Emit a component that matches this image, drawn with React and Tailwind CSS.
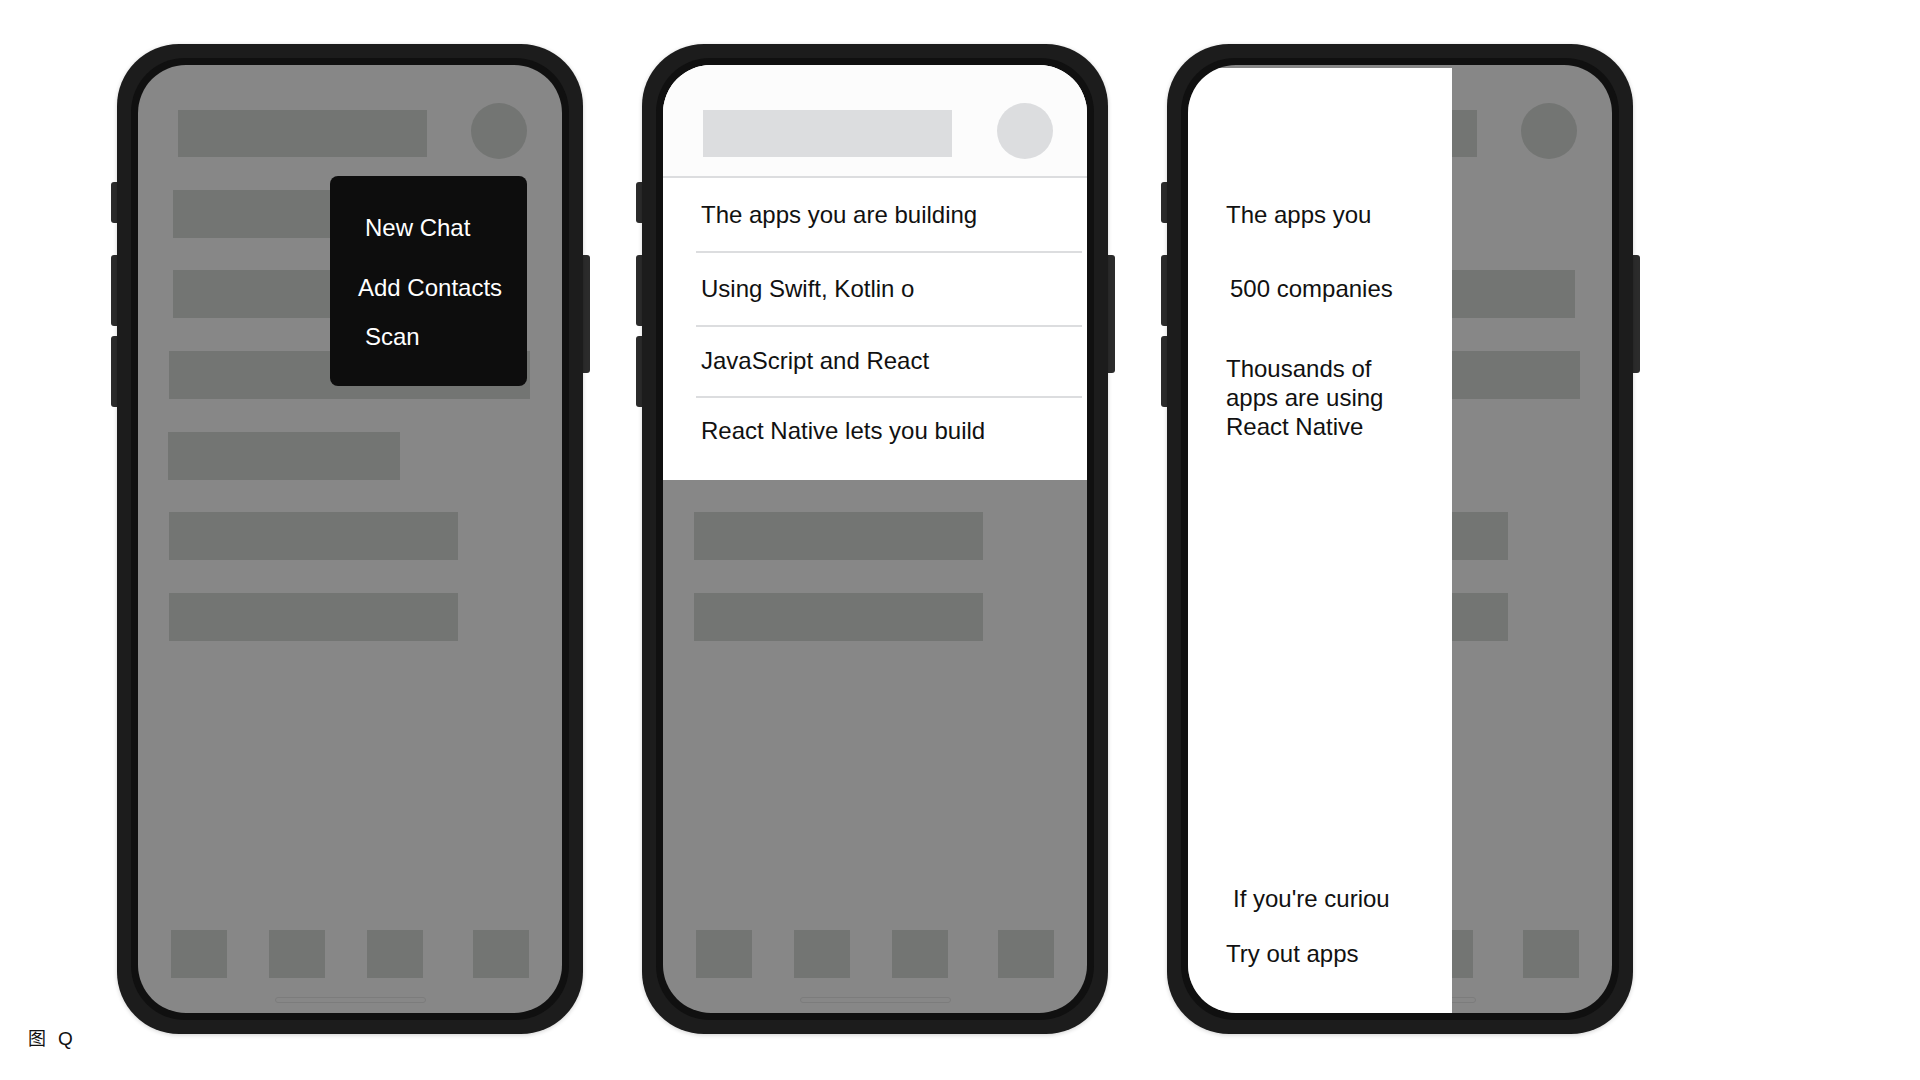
import React from "react";

function GrayScreen() {
  return (
    <div className="flex h-full w-full flex-col bg-[#878787]">
      <div className="flex items-start pl-[40px] pt-[38px]">
        <div className="mt-[7px] h-[47px] w-[249px] bg-[#737573]" />
        <div className="ml-[44px] h-[56px] w-[56px] rounded-full bg-[#737573]" />
      </div>
      <div className="ml-[35px] mt-[31px] h-[48px] w-[205px] bg-[#737573]" />
      <div className="ml-[35px] mt-[32px] h-[48px] w-[352px] bg-[#737573]" />
      <div className="ml-[31px] mt-[33px] h-[48px] w-[361px] bg-[#737573]" />
      <div className="ml-[30px] mt-[33px] h-[48px] w-[232px] bg-[#737573]" />
      <div className="ml-[31px] mt-[32px] h-[48px] w-[289px] bg-[#737573]" />
      <div className="ml-[31px] mt-[33px] h-[48px] w-[289px] bg-[#737573]" />
      <div className="mt-auto flex flex-col pb-[10px]">
        <div className="flex pl-[33px]">
          <div className="h-[48px] w-[56px] bg-[#737573]" />
          <div className="ml-[42px] h-[48px] w-[56px] bg-[#737573]" />
          <div className="ml-[42px] h-[48px] w-[56px] bg-[#737573]" />
          <div className="ml-[50px] h-[48px] w-[56px] bg-[#737573]" />
        </div>
        <div className="mx-auto mt-[19px] h-[6px] w-[151px] rounded-full border border-[#7c7c7c]" />
      </div>
    </div>
  );
}

function Phone({ children }) {
  return (
    <div className="relative h-[990px] w-[466px] shrink-0">
      <div className="absolute left-[-6px] top-[138px] h-[41px] w-[8px] rounded-l-[3px] bg-[#2b2b2b]" />
      <div className="absolute left-[-6px] top-[211px] h-[71px] w-[8px] rounded-l-[3px] bg-[#2b2b2b]" />
      <div className="absolute left-[-6px] top-[292px] h-[71px] w-[8px] rounded-l-[3px] bg-[#2b2b2b]" />
      <div className="absolute right-[-7px] top-[211px] h-[118px] w-[9px] rounded-r-[3px] bg-[#2b2b2b]" />
      <div className="relative h-full w-full rounded-[62px] bg-[#1c1c1c] p-[14px] shadow-[0_1px_4px_rgba(0,0,0,0.18)]">
        <div className="h-full w-full rounded-[54px] bg-[#101010] p-[7px]">
          <div className="relative h-full w-full overflow-hidden rounded-[48px]">
            {children}
          </div>
        </div>
      </div>
    </div>
  );
}

const txt = "font-['Liberation_Sans',Arial,Helvetica,sans-serif] text-[24px] leading-[28px]";

function PhoneOne() {
  return (
    <Phone>
      <GrayScreen />
      <div className={`absolute left-[192px] top-[111px] flex h-[210px] w-[197px] flex-col rounded-[8px] bg-[#0d0d0d] text-white ${txt}`}>
        <div className="ml-[35px] mt-[38px]">New Chat</div>
        <div className="ml-[28px] mt-[32px]">Add Contacts</div>
        <div className="ml-[35px] mt-[21px]">Scan</div>
      </div>
    </Phone>
  );
}

function PhoneTwo() {
  return (
    <Phone>
      <GrayScreen />
      <div className={`absolute left-0 right-0 top-0 flex h-[415px] flex-col bg-white text-[#111] ${txt}`}>
        <div className="flex h-[111px] items-start bg-[#fcfcfc] pl-[40px] pt-[38px]">
          <div className="mt-[7px] h-[47px] w-[249px] bg-[#dcdddf]" />
          <div className="ml-[45px] h-[56px] w-[56px] rounded-full bg-[#dcdddf]" />
        </div>
        <div className="h-[2px] w-full bg-[#dcdddf]" />
        <div className="pb-[22px] pl-[38px] pt-[23px]">The apps you are building</div>
        <div className="ml-[33px] mr-[5px] h-[2px] bg-[#dcdddf]" />
        <div className="pb-[22px] pl-[38px] pt-[22px]">Using Swift, Kotlin o</div>
        <div className="ml-[33px] mr-[5px] h-[2px] bg-[#dcdddf]" />
        <div className="pb-[21px] pl-[38px] pt-[20px]">JavaScript and React</div>
        <div className="ml-[33px] mr-[5px] h-[2px] bg-[#dcdddf]" />
        <div className="pl-[38px] pt-[19px]">React Native lets you build</div>
      </div>
    </Phone>
  );
}

function PhoneThree() {
  return (
    <Phone>
      <GrayScreen />
      <div className={`absolute bottom-0 left-0 top-[3px] flex w-[264px] flex-col bg-white pb-[45px] text-[#111] ${txt}`}>
        <div className="ml-[38px] mt-[133px]">The apps you</div>
        <div className="ml-[42px] mt-[46px]">500 companies</div>
        <div className="ml-[38px] mt-[51px] leading-[29px]">
          Thousands of
          <br />
          apps are using
          <br />
          React Native
        </div>
        <div className="ml-[45px] mt-auto">If you're curiou</div>
        <div className="ml-[38px] mt-[27px]">Try out apps</div>
      </div>
    </Phone>
  );
}

export default function App() {
  return (
    <div className="h-[1080px] w-[1920px] overflow-hidden bg-white">
      <div className="flex gap-[59px] pl-[117px] pt-[44px]">
        <PhoneOne />
        <PhoneTwo />
        <PhoneThree />
      </div>
      <div className="-mt-[9px] flex items-baseline gap-[12px] pl-[28px] font-['Liberation_Sans','Noto_Sans_CJK_SC',sans-serif] text-[19px] leading-[24px] text-[#111]">
        <span className="font-['Noto_Sans_CJK_SC',sans-serif] text-[18px]">图</span>
        <span>Q</span>
      </div>
    </div>
  );
}
